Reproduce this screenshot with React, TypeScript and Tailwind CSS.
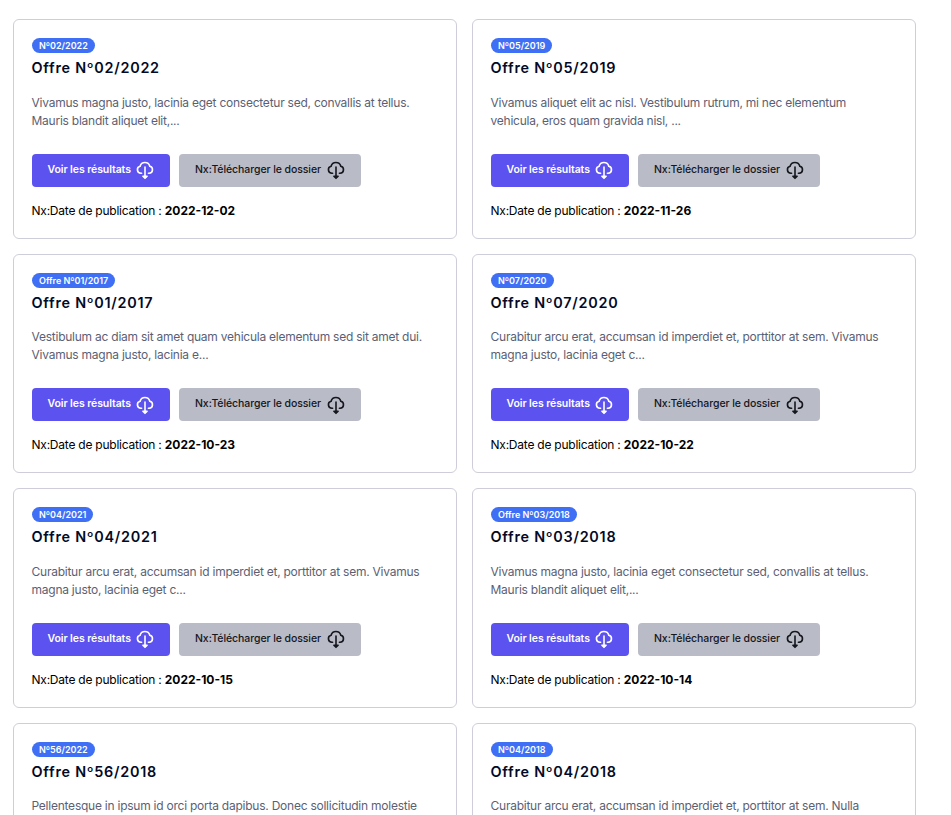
type Offer = { badge: string; title: string; lines: string[]; date: string };

const offers: Offer[] = [
  { badge: "Nº02/2022", title: "Offre Nº02/2022", lines: ["Vivamus magna justo, lacinia eget consectetur sed, convallis at tellus.", "Mauris blandit aliquet elit,..."], date: "2022-12-02" },
  { badge: "Nº05/2019", title: "Offre Nº05/2019", lines: ["Vivamus aliquet elit ac nisl. Vestibulum rutrum, mi nec elementum", "vehicula, eros quam gravida nisl, ..."], date: "2022-11-26" },
  { badge: "Offre Nº01/2017", title: "Offre Nº01/2017", lines: ["Vestibulum ac diam sit amet quam vehicula elementum sed sit amet dui.", "Vivamus magna justo, lacinia e..."], date: "2022-10-23" },
  { badge: "Nº07/2020", title: "Offre Nº07/2020", lines: ["Curabitur arcu erat, accumsan id imperdiet et, porttitor at sem. Vivamus", "magna justo, lacinia eget c..."], date: "2022-10-22" },
  { badge: "Nº04/2021", title: "Offre Nº04/2021", lines: ["Curabitur arcu erat, accumsan id imperdiet et, porttitor at sem. Vivamus", "magna justo, lacinia eget c..."], date: "2022-10-15" },
  { badge: "Offre Nº03/2018", title: "Offre Nº03/2018", lines: ["Vivamus magna justo, lacinia eget consectetur sed, convallis at tellus.", "Mauris blandit aliquet elit,..."], date: "2022-10-14" },
  { badge: "Nº56/2022", title: "Offre Nº56/2018", lines: ["Pellentesque in ipsum id orci porta dapibus. Donec sollicitudin molestie"], date: "" },
  { badge: "Nº04/2018", title: "Offre Nº04/2018", lines: ["Curabitur arcu erat, accumsan id imperdiet et, porttitor at sem. Nulla"], date: "" },
];

function CloudDownload() {
  return (
    <svg width="18" height="20" viewBox="4 3 18 20" fill="none" stroke="currentColor" strokeWidth="1.6" strokeLinecap="round" strokeLinejoin="round">
      <path d="M9.6 16.2H8.9A3.5 3.5 0 0 1 8.1 9.3A5 5 0 0 1 17.8 9.3A3.5 3.5 0 0 1 17.1 16.2H16.4M13 10V20" />
      <path d="M10.9 19.2H15.1L13 21.3Z" fill="currentColor" />
    </svg>
  );
}

function OfferCard({ offer }: { offer: Offer }) {
  return (
    <article className="flex h-[219.6px] flex-col items-start rounded-md border border-[#cdced9] px-[18px] pt-[18px]">
      <span className="flex h-[15px] items-center rounded-full bg-[#3e6ff4] px-[7px] text-[9px] leading-[15px] font-semibold whitespace-nowrap text-white">
        {offer.badge}
      </span>
      <h2 className="mt-1 -ml-[0.5px] text-[14.4px] leading-[22px] font-semibold tracking-[0.74px] whitespace-nowrap text-[#020a26]">{offer.title}</h2>
      <p className="mt-[14.6px] -ml-[0.5px] h-9 text-[12px] leading-[18px] tracking-[-0.24px] whitespace-nowrap text-[#5c5f74]">
        {offer.lines.map((line) => (
          <span key={line} className="block">{line}</span>
        ))}
      </p>
      {offer.date && (
        <>
          <div className="mt-6 flex gap-[9px]">
            <button className="flex h-[33px] w-[138px] items-center rounded bg-[#5b52f0] pl-[15.5px] text-[10.5px] font-semibold tracking-[-0.08px] whitespace-nowrap text-white">
              <span className="-mt-px w-[88.5px] text-left">Voir les résultats</span>
              <CloudDownload />
            </button>
            <button className="flex h-[33px] w-[182px] items-center rounded bg-[#b9bbc6] pl-4 text-[10.5px] font-medium tracking-[-0.08px] whitespace-nowrap text-[#16161d]">
              <span className="-mt-px w-[132px] text-left">Nx:Télécharger le dossier</span>
              <CloudDownload />
            </button>
          </div>
          <p className="mt-[15px] -ml-[0.5px] text-[12px] leading-[18px] whitespace-nowrap text-black">
            <span className="tracking-[-0.23px]">Nx:Date de publication : </span>
            <strong className="font-bold">{offer.date}</strong>
          </p>
        </>
      )}
    </article>
  );
}

export default function App() {
  return (
    <main className="h-[815px] w-[951px] overflow-hidden bg-white pt-[19px] pl-[13px] font-['Inter',sans-serif]">
      <div className="grid w-[903px] grid-cols-2 gap-[15px]">
        {offers.map((offer) => (
          <OfferCard key={offer.title} offer={offer} />
        ))}
      </div>
    </main>
  );
}
